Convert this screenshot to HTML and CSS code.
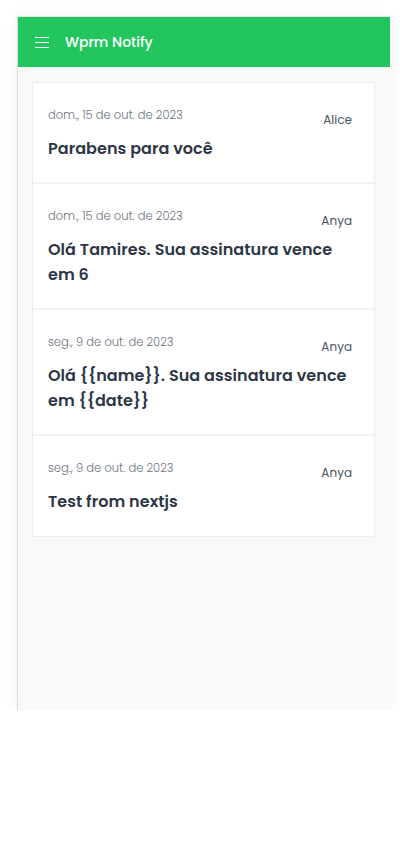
FILE: index.html
```html
<!DOCTYPE html>
<html lang="pt-BR">
<head>
<meta charset="utf-8">
<title>Wprm Notify</title>
<link rel="stylesheet" href="styles.css">
</head>
<body>
<div class="app">
  <header class="topbar">
    <svg class="menu-icon" width="14" height="16" viewBox="0 0 14 16" aria-hidden="true">
      <path d="M0 3.5h14M0 8.5h14M0 13.5h14" stroke="#fff" stroke-width="1.1" fill="none"/>
    </svg>
    <span class="brand">Wprm Notify</span>
  </header>
  <main class="content">
    <ul class="list">
      <li class="item">
        <div class="meta"><span class="date">dom., 15 de out. de 2023</span><span class="name">Alice</span></div>
        <h2 class="title">Parabens para você</h2>
      </li>
      <li class="item">
        <div class="meta"><span class="date">dom., 15 de out. de 2023</span><span class="name">Anya</span></div>
        <h2 class="title">Olá Tamires. Sua assinatura vence em 6</h2>
      </li>
      <li class="item">
        <div class="meta"><span class="date">seg., 9 de out. de 2023</span><span class="name">Anya</span></div>
        <h2 class="title">Olá {{name}}. Sua assinatura vence em {{date}}</h2>
      </li>
      <li class="item">
        <div class="meta"><span class="date">seg., 9 de out. de 2023</span><span class="name">Anya</span></div>
        <h2 class="title">Test from nextjs</h2>
      </li>
    </ul>
  </main>
</div>
</body>
</html>
```
FILE: styles.css
```css
* { box-sizing: border-box; }
html, body { margin: 0; padding: 0; background: #fff; }
body {
  font-family: Poppins, "Inter", "Noto Sans", sans-serif;
  padding: 16px 0 0 17px;
}
.app {
  width: 373px;
  height: 694px;
  background: #f9f9f8;
  border-top: 1px solid #e4e4e4;
  border-left: 1px solid #dcdcdc;
  box-shadow: 0 0 14px rgba(0,0,0,0.06);
  display: flex;
  flex-direction: column;
}
.topbar {
  height: 50px;
  background: #22c55e;
  display: flex;
  align-items: center;
  padding-left: 17px;
  gap: 16px;
  color: #fff;
}
.menu-icon { display: block; }
.brand {
  font-size: 14px;
  font-weight: 500;
}
.content {
  padding: 15px 15px 0 14px;
}
.list {
  list-style: none;
  margin: 0;
  padding: 0;
  background: #fff;
  border: 1px solid #eeeeee;
}
.item {
  padding: 23px 22px 21px 15px;
  border-bottom: 2px solid #f3f3f3;
}
.item:last-child { border-bottom: none; padding-bottom: 22px; }
.meta {
  display: flex;
  justify-content: space-between;
  align-items: flex-start;
}
.date {
  font-size: 11.5px;
  line-height: 18px;
  font-weight: 300;
  color: #6b7280;
}
.name {
  margin-top: 5px;
  font-size: 12px;
  line-height: 18px;
  color: #4b5563;
}
.title {
  margin: 7px 0 0;
  font-size: 16px;
  line-height: 25px;
  font-weight: 600;
  color: #2d3646;
  letter-spacing: 0.05px;
}
```
